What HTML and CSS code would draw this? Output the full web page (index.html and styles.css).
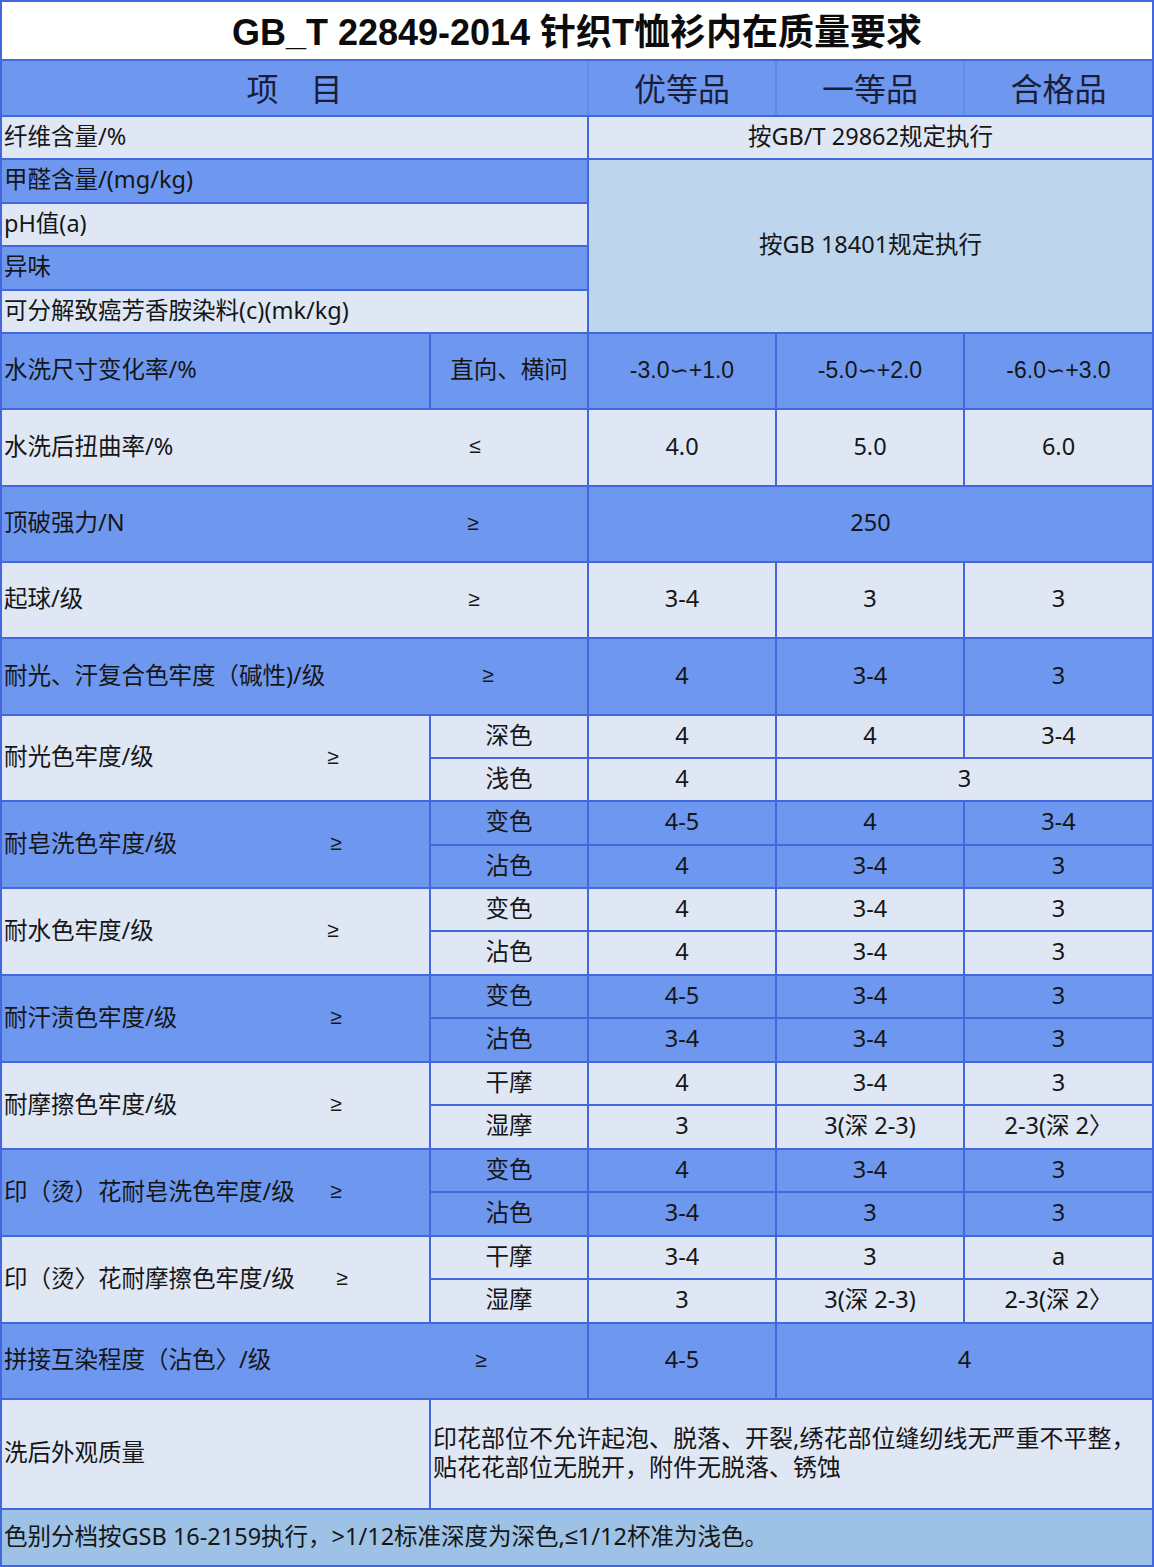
FILE: index.html
```html
<!DOCTYPE html>
<html lang="zh-CN">
<head>
<meta charset="utf-8">
<title>GB_T 22849-2014 针织T恤衫内在质量要求</title>
<link rel="stylesheet" href="styles.css">
</head>
<body>
<div class="sheet">
  <div class="title span5">GB_T 22849-2014 针织T恤衫内在质量要求</div>
  <div class="head span5">
    <div class="hc">项　目</div>
    <div class="hc">优等品</div>
    <div class="hc">一等品</div>
    <div class="hc">合格品</div>
  </div>

  <div class="c l span2 left">纤维含量/%</div>
  <div class="c l span3">按GB/T 29862规定执行</div>

  <div class="c d span2 left">甲醛含量/(mg/kg)</div>
  <div class="c m span3 rows4">按GB 18401规定执行</div>
  <div class="c l span2 left">pH值(a)</div>
  <div class="c d span2 left">异味</div>
  <div class="c l span2 left">可分解致癌芳香胺染料(c)(mk/kg)</div>

  <div class="c d left">水洗尺寸变化率/%</div>
  <div class="c d">直向、横问</div>
  <div class="c d arial">-3.0∽+1.0</div>
  <div class="c d arial">-5.0∽+2.0</div>
  <div class="c d arial">-6.0∽+3.0</div>

  <div class="c l span2 left"><span class="lab w459">水洗后扭曲率/%</span><span class="sym">≤</span></div>
  <div class="c l">4.0</div>
  <div class="c l">5.0</div>
  <div class="c l">6.0</div>

  <div class="c d span2 left"><span class="lab w457">顶破强力/N</span><span class="sym">≥</span></div>
  <div class="c d span3">250</div>

  <div class="c l span2 left"><span class="lab w458">起球/级</span><span class="sym">≥</span></div>
  <div class="c l">3-4</div>
  <div class="c l">3</div>
  <div class="c l">3</div>

  <div class="c d span2 left"><span class="lab w472">耐光、汗复合色牢度（碱性)/级</span><span class="sym">≥</span></div>
  <div class="c d">4</div>
  <div class="c d">3-4</div>
  <div class="c d">3</div>

  <div class="c l rows2 left"><span class="lab w317">耐光色牢度/级</span><span class="sym">≥</span></div>
  <div class="c l">深色</div>
  <div class="c l">4</div>
  <div class="c l">4</div>
  <div class="c l">3-4</div>
  <div class="c l">浅色</div>
  <div class="c l">4</div>
  <div class="c l span2">3</div>

  <div class="c d rows2 left"><span class="lab w320">耐皂洗色牢度/级</span><span class="sym">≥</span></div>
  <div class="c d">变色</div>
  <div class="c d">4-5</div>
  <div class="c d">4</div>
  <div class="c d">3-4</div>
  <div class="c d">沾色</div>
  <div class="c d">4</div>
  <div class="c d">3-4</div>
  <div class="c d">3</div>

  <div class="c l rows2 left"><span class="lab w317">耐水色牢度/级</span><span class="sym">≥</span></div>
  <div class="c l">变色</div>
  <div class="c l">4</div>
  <div class="c l">3-4</div>
  <div class="c l">3</div>
  <div class="c l">沾色</div>
  <div class="c l">4</div>
  <div class="c l">3-4</div>
  <div class="c l">3</div>

  <div class="c d rows2 left"><span class="lab w320">耐汗渍色牢度/级</span><span class="sym">≥</span></div>
  <div class="c d">变色</div>
  <div class="c d">4-5</div>
  <div class="c d">3-4</div>
  <div class="c d">3</div>
  <div class="c d">沾色</div>
  <div class="c d">3-4</div>
  <div class="c d">3-4</div>
  <div class="c d">3</div>

  <div class="c l rows2 left"><span class="lab w320">耐摩擦色牢度/级</span><span class="sym">≥</span></div>
  <div class="c l">干摩</div>
  <div class="c l">4</div>
  <div class="c l">3-4</div>
  <div class="c l">3</div>
  <div class="c l">湿摩</div>
  <div class="c l">3</div>
  <div class="c l">3(深 2-3)</div>
  <div class="c l">2-3(深 2〉</div>

  <div class="c d rows2 left"><span class="lab w320">印（烫）花耐皂洗色牢度/级</span><span class="sym">≥</span></div>
  <div class="c d">变色</div>
  <div class="c d">4</div>
  <div class="c d">3-4</div>
  <div class="c d">3</div>
  <div class="c d">沾色</div>
  <div class="c d">3-4</div>
  <div class="c d">3</div>
  <div class="c d">3</div>

  <div class="c l rows2 left"><span class="lab w326">印（烫〉花耐摩擦色牢度/级</span><span class="sym">≥</span></div>
  <div class="c l">干摩</div>
  <div class="c l">3-4</div>
  <div class="c l">3</div>
  <div class="c l">a</div>
  <div class="c l">湿摩</div>
  <div class="c l">3</div>
  <div class="c l">3(深 2-3)</div>
  <div class="c l">2-3(深 2〉</div>

  <div class="c d span2 left"><span class="lab w465">拼接互染程度（沾色〉/级</span><span class="sym">≥</span></div>
  <div class="c d">4-5</div>
  <div class="c d span2">4</div>

  <div class="c l left">洗后外观质量</div>
  <div class="c l span4 left para">印花部位不允许起泡、脱落、开裂,绣花部位缝纫线无严重不平整，<br>贴花花部位无脱开，附件无脱落、锈蚀</div>

  <div class="c f span5 left">色别分档按GSB 16-2159执行，&gt;1/12标准深度为深色,<span class="le">≤</span>1/12杯准为浅色。</div>
</div>
</body>
</html>
```

FILE: styles.css
```css
html, body {
  margin: 0;
  padding: 0;
  background: #ffffff;
}

body {
  width: 1154px;
  height: 1567px;
  overflow: hidden;
  font-family: "Noto Sans", "Noto Sans CJK SC", sans-serif;
  color: #161616;
}

.sheet {
  box-sizing: border-box;
  width: 1154px;
  height: 1567px;
  padding: 2px;
  display: grid;
  grid-template-columns: 427px 156px 186px 186px 187px;
  grid-template-rows:
    57px 54px
    41px 42px 41px 42px 41px
    74px 75px 74px 74px 75px
    41px 41px 42px 41px 41px 42px 41px 42px 41px 42px 41px 42px 41px 42px
    74px 108px 55px;
  gap: 2px;
  background: #4367dc;
}

.span2 { grid-column: span 2; }
.span3 { grid-column: span 3; }
.span4 { grid-column: span 4; }
.span5 { grid-column: span 5; }
.rows2 { grid-row: span 2; }
.rows4 { grid-row: span 4; }

.title {
  background: #ffffff;
  display: flex;
  align-items: center;
  justify-content: center;
  font-family: "Liberation Sans", "Noto Sans CJK SC", sans-serif;
  font-weight: 700;
  font-size: 36px;
  color: #0c0c0c;
  padding-bottom: 3px;
}

.head {
  display: grid;
  grid-template-columns: 585px 186px 186px 187px;
  gap: 2px;
  background: #5d8cef;
}

.hc {
  background: #6e98ef;
  display: flex;
  align-items: center;
  justify-content: center;
  font-family: "Noto Sans CJK SC", sans-serif;
  font-size: 32px;
  color: #1a1d3a;
  padding-bottom: 3px;
}

.c {
  display: flex;
  align-items: center;
  justify-content: center;
  font-size: 23.5px;
  white-space: nowrap;
  line-height: 1.25;
  padding-bottom: 2px;
}

.left {
  justify-content: flex-start;
  padding-left: 2px;
}

.d { background: #6e98ef; }
.l { background: #dfe7f5; }
.m { background: #bdd6ee; }
.f { background: #9dc2e6; }

.arial {
  font-family: "Liberation Sans", "DejaVu Sans", "Noto Sans CJK SC", sans-serif;
  font-size: 23px;
}

.para {
  font-size: 24px;
  line-height: 29px;
  padding-bottom: 4px;
}

.lab { display: inline-block; }
.sym {
  display: inline-block;
  width: 24px;
  text-align: center;
  font-family: "Liberation Sans", "DejaVu Sans", sans-serif;
  font-size: 21px;
}

.le {
  font-family: "Liberation Sans", "DejaVu Sans", sans-serif;
}

.w317 { width: 317px; }
.w320 { width: 320px; }
.w326 { width: 326px; }
.w457 { width: 457px; }
.w458 { width: 458px; }
.w459 { width: 459px; }
.w465 { width: 465px; }
.w472 { width: 472px; }
```
